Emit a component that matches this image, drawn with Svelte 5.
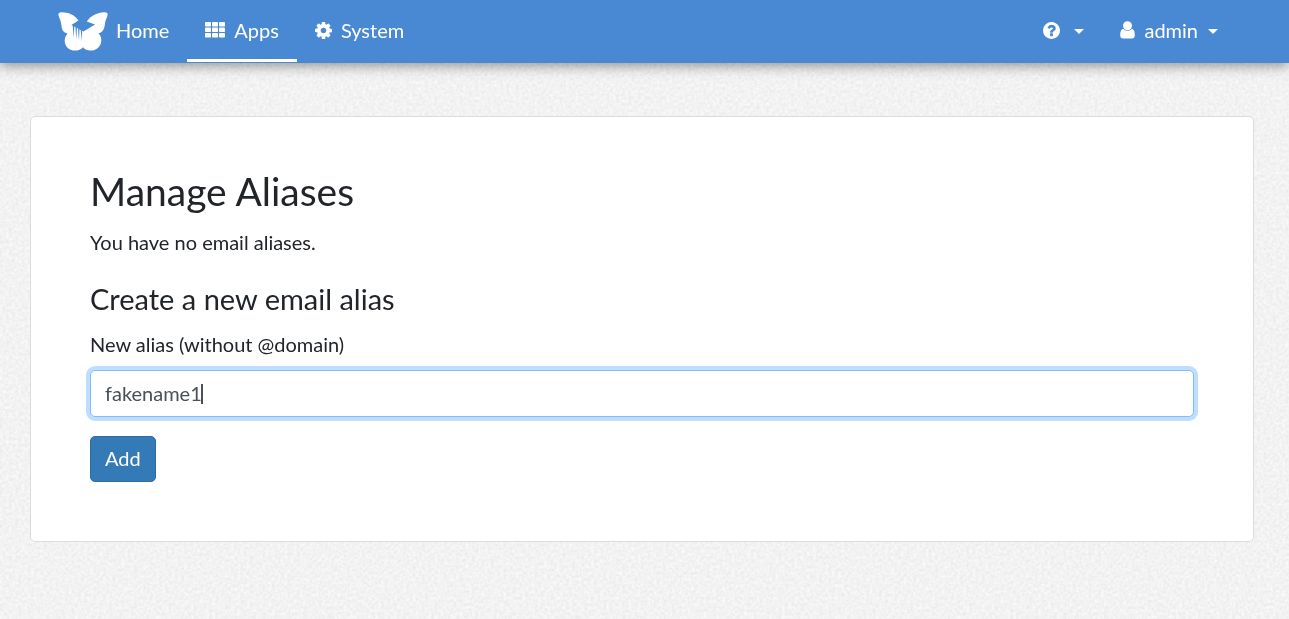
<script>
  import { onMount } from 'svelte';

  let alias = $state('fakename1');
  let field;
  let focused = $state(false);
  let caretX = $state(0);

  function measure() {
    const style = getComputedStyle(field);
    const ctx = document.createElement('canvas').getContext('2d');
    ctx.font = `${style.fontSize} ${style.fontFamily}`;
    const before = alias.slice(0, field.selectionStart ?? alias.length);
    caretX = Math.round(parseFloat(style.paddingLeft) + ctx.measureText(before).width);
  }

  onMount(() => {
    field.focus();
    field.setSelectionRange(alias.length, alias.length);
    focused = true;
    measure();
  });
</script>

<svg class="paper" aria-hidden="true">
  <filter id="grain" x="0" y="0" width="100%" height="100%" color-interpolation-filters="sRGB">
    <feTurbulence type="fractalNoise" baseFrequency="0.32" numOctaves="3" seed="4" stitchTiles="stitch" />
    <feColorMatrix values="0.09 0 0 0 0.905  0.09 0 0 0 0.905  0.09 0 0 0 0.905  0 0 0 0 1" />
  </filter>
  <rect width="100%" height="100%" filter="url(#grain)" />
</svg>

<header>
  <nav>
    <a class="item home" href="#home">
      <svg class="logo" viewBox="0 -2 50 42" aria-hidden="true">
        <path fill="#fff" d="M0.3 3C0.8 1.800 2 1.200 4 1.200C10 1.300 16.500 3.500 20.500 9.500L13.300 14L25.500 20.500L37 13.500L28.800 10.500C32.500 4.500 40 1.300 46 1.200C48.400 1.100 49.700 1.800 49.700 3.300C49.400 6.500 47.500 8.500 47 12C46.600 16 46 21.200 40.500 22.300C43.300 25 44 29 42.800 32.500C41.200 37.200 37 39.700 32.500 39.600C29.300 39.500 26.700 38.300 25 36.200C23.300 38.300 20 39.600 17 39.600C10.800 39.600 6.700 35 6.700 30C6.700 27 7.800 24.300 9.600 22.700C4.400 21.400 3.600 17 3.200 12.700C2.800 8.500 0.400 6.600 0.300 3Z" />
        <path fill="#4989d4" d="M14.700 14.500L16.300 15.300L15.700 27ZM17.400 16L18.900 16.800L18.300 29ZM20 17.300L21.500 18L21 30ZM22.600 18.600L24.100 19.400L24 30.500Z" />
      </svg>
      <span>Home</span>
    </a>
    <a class="item active" href="#apps" aria-current="page">
      <svg class="grid-icon" viewBox="0 0 20 16" fill="#fff" aria-hidden="true">
        {#each [0, 5.5, 11] as y}
          {#each [0, 7, 14] as x}
            <rect {x} {y} width="6" height="4.5" rx="0.8" />
          {/each}
        {/each}
      </svg>
      <span>Apps</span>
    </a>
    <a class="item" href="#system">
      <svg class="cog" viewBox="0 0 1536 1536" aria-hidden="true">
        <path fill="#fff" d="M1024 768q0-106-75-181t-181-75-181 75-75 181 75 181 181 75 181-75 75-181zm512-109v222q0 12-8 23t-20 13l-185 28q-19 54-39 91 35 50 107 138 10 12 10 25t-9 23q-27 37-99 108t-94 71q-12 0-26-9l-138-108q-44 23-91 38-16 136-29 186-7 28-36 28H657q-14 0-24.500-8.500T621 1506l-28-184q-49-16-90-37l-141 107q-10 9-25 9-14 0-25-11-126-114-165-168-7-10-7-23 0-12 8-23 15-21 51-66.500t54-70.500q-27-50-41-99L29 913q-13-2-21-12.500T0 877V655q0-12 8-23t19-13l186-28q14-46 39-92-40-57-107-138-10-12-10-24 0-10 9-23 26-36 98.500-107.500T337 135q13 0 26 10l138 107q44-23 91-38 16-136 29-186 7-28 36-28h222q14 0 24.500 8.500T915 30l28 184q49 16 90 37l142-107q9-9 24-9 13 0 25 10 129 119 165 170 7 8 7 22 0 12-8 23-15 21-51 66.500t-54 70.500q26 50 41 98l183 28q13 2 21 12.500t8 23.500z" />
      </svg>
      <span>System</span>
    </a>
  </nav>
  <nav>
    <button class="item" type="button" aria-label="Help">
      <svg class="help" viewBox="0 0 1536 1536" aria-hidden="true">
        <path fill="#fff" d="M896 1248v-192q0-14-9-23t-23-9H672q-14 0-23 9t-9 23v192q0 14 9 23t23 9h192q14 0 23-9t9-23zm256-672q0-88-55.500-163T958 297t-170-41q-243 0-371 213-15 24 8 42l132 100q7 6 19 6 16 0 25-12 53-68 86-92 34-24 86-24 48 0 85.500 26t37.500 59q0 38-20 61t-68 45q-63 28-115.500 86.500T640 892v36q0 14 9 23t23 9h192q14 0 23-9t9-23q0-19 21.500-49.500T972 829q32-18 49-28.500t46-35 44.500-48 28-60.500 12.500-81zm384 192q0 209-103 385.500T1153.500 1433 768 1536t-385.500-103T103 1153.500 0 768t103-385.500T382.500 103 768 0t385.500 103T1433 382.500 1536 768z" />
      </svg>
      <i class="arrow"></i>
    </button>
    <button class="item" type="button">
      <svg class="person" viewBox="0 0 15 18" fill="#fff" aria-hidden="true">
        <circle cx="7.500" cy="4.700" r="4.500" />
        <path d="M3.300 7.700C4.400 9 5.800 9.800 7.500 9.800S10.600 9 11.700 7.700C14 8.200 14.800 10.600 14.800 14.200C14.800 16.300 13.600 17.400 12 17.400H3C1.400 17.400 0.200 16.300 0.200 14.200C0.200 10.600 1 8.200 3.300 7.700Z" />
      </svg>
      <span>admin</span>
      <i class="arrow"></i>
    </button>
  </nav>
</header>

<main>
  <section class="card">
    <h1>Manage Aliases</h1>
    <p>You have no email aliases.</p>
    <h2>Create a new email alias</h2>
    <form onsubmit={(e) => e.preventDefault()}>
      <label for="alias">New alias (without @domain)</label>
      <div class="field">
        <input
          id="alias"
          type="text"
          autocomplete="off"
          spellcheck="false"
          bind:this={field}
          bind:value={alias}
          oninput={measure}
          onkeyup={measure}
          onclick={measure}
          onfocus={() => (focused = true)}
          onblur={() => (focused = false)}
        />
        {#if focused}
          <span class="caret" style="left: {caretX}px"></span>
        {/if}
      </div>
      <button class="add" type="submit">Add</button>
    </form>
  </section>
</main>

<style>
  :global(body) {
    margin: 0;
    background: #f2f2f2;
    color: #212529;
    font-family: Lato, "Open Sans", sans-serif;
    font-size: 20px;
    line-height: 28px;
  }

  .paper {
    position: fixed;
    inset: 0;
    z-index: -1;
    width: 100%;
    height: 100%;
  }

  header {
    display: flex;
    justify-content: space-between;
    height: 63px;
    padding: 0 53px 0 48px;
    box-sizing: border-box;
    background: #4989d4;
    box-shadow: 0 3px 12px rgba(0, 0, 0, 0.4);
  }

  nav {
    display: flex;
  }

  .item {
    display: flex;
    align-items: center;
    gap: 9px;
    height: 62px;
    padding: 0 18px;
    box-sizing: border-box;
    border: 0;
    border-bottom: 3px solid transparent;
    border-top: 1px solid transparent;
    background: none;
    color: #fff;
    font: inherit;
    text-decoration: none;
  }

  .home {
    gap: 8px;
    padding-left: 10px;
  }

  .active {
    border-bottom-color: #fff;
  }

  .logo {
    width: 50px;
    height: 42px;
  }

  .grid-icon {
    width: 20px;
    height: 16px;
  }

  .cog,
  .help {
    width: 17px;
    height: 17px;
  }

  .person {
    width: 15px;
    height: 18px;
  }

  .arrow {
    margin: 3px 0 0 1px;
    border: 5px solid transparent;
    border-top-color: #fff;
    border-bottom: 0;
  }

  .help + .arrow {
    margin-left: 5px;
  }

  main {
    padding: 53px 35px 53px 30px;
  }

  .card {
    padding: 50px 59px 59px;
    border: 1px solid #dcdcdc;
    border-radius: 5px;
    background: #fff;
  }

  h1,
  h2 {
    margin: 0;
    font-weight: 400;
  }

  h1 {
    margin-bottom: 13px;
    font-size: 39px;
    line-height: 48px;
  }

  p {
    margin: 0 0 25px;
  }

  h2 {
    margin-bottom: 14px;
    font-size: 29px;
    line-height: 35px;
  }

  label {
    display: block;
    margin-bottom: 12px;
  }

  .field {
    position: relative;
    margin-bottom: 19px;
  }

  input {
    display: block;
    width: 100%;
    height: 47px;
    padding: 0 14px 2px;
    box-sizing: border-box;
    border: 1px solid #ced4da;
    border-radius: 5px;
    background: #fff;
    color: #495057;
    caret-color: transparent;
    font: inherit;
  }

  input:focus {
    border-color: #80bdff;
    outline: 0;
    box-shadow: 0 0 0 4px #bfdeff;
  }

  .caret {
    position: absolute;
    top: 14px;
    width: 2px;
    height: 20px;
    background: #495057;
    pointer-events: none;
  }

  .add {
    display: block;
    height: 46px;
    padding: 0 14px 2px;
    border: 1px solid #2e6da4;
    border-radius: 5px;
    background: #337ab7;
    color: #fff;
    font: inherit;
  }
</style>
